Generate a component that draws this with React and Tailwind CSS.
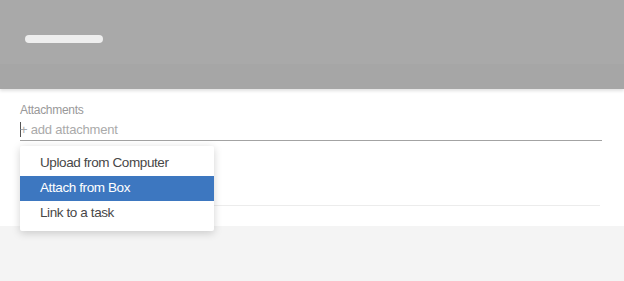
import React from 'react';

const font = { fontFamily: '"Liberation Sans", Arial, Helvetica, sans-serif' };

const menuItems = [
  { id: 'upload', label: 'Upload from Computer' },
  { id: 'box', label: 'Attach from Box', active: true },
  { id: 'task', label: 'Link to a task' },
];

export default function App() {
  return (
    <div className="w-[624px] h-[281px] bg-[#f4f4f4] overflow-hidden" style={font}>
      {/* header */}
      <div className="relative z-10 shadow-[0_2px_3px_rgba(0,0,0,0.12)]">
        <div className="h-[64px] bg-[#a9a9a9] pl-[25px] pt-[35px]">
          <div className="w-[78px] h-[8px] rounded-full bg-[#eeeeee]" />
        </div>
        <div className="h-[25px] bg-[#a6a6a6]" />
      </div>

      {/* content */}
      <div className="bg-white h-[137px] px-5 pt-[14px]">
        <div className="relative">
          <label className="block text-[12px] tracking-[-0.3px] leading-[14px] text-[#999999]">Attachments</label>
          <div className="mt-[2px] flex items-center h-[22px] border-b border-[#a3a3a3] w-[582px]">
            <span className="w-px h-[15px] bg-[#555555]" />
            <span className="text-[13px] tracking-[-0.2px] text-[#aaaaaa] -ml-px">+ add attachment</span>
          </div>

          <div className="mt-[64px] border-b border-[#ececec] w-[580px]" />

          {/* dropdown */}
          <ul className="absolute left-0 top-[43px] w-[194px] bg-white rounded-[2px] py-[5px] shadow-[0_2px_8px_rgba(0,0,0,0.18)]">
            {menuItems.map((item) => (
              <li
                key={item.id}
                className={`h-[25px] flex items-center pl-5 text-[13.5px] tracking-[-0.4px] ${
                  item.active ? 'bg-[#3d77c0] text-white' : 'text-[#474747]'
                }`}
              >
                {item.label}
              </li>
            ))}
          </ul>
        </div>
      </div>
    </div>
  );
}
